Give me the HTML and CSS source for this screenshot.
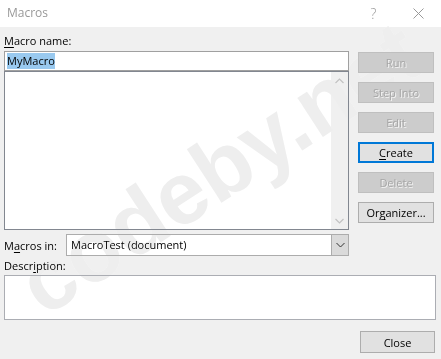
FILE: index.html
```html
<!DOCTYPE html>
<html lang="en">
<head>
    <meta charset="UTF-8">
    <meta name="viewport" content="width=device-width, initial-scale=1">
    <title>Macros</title>
    <link rel="stylesheet" href="styles.css">
</head>
<body>
<div class="dialog">
    <div class="watermark wm-under" aria-hidden="true">codeby.net</div>

    <div class="titlebar">
        <span class="title">Macros</span>
        <span class="caption-btn help">?</span>
        <span class="caption-btn">
            <svg width="11" height="11" viewBox="0 0 11 11"><path d="M0.5 0.5 L10.5 10.5 M10.5 0.5 L0.5 10.5" stroke="#999" stroke-width="1" fill="none"/></svg>
        </span>
    </div>

    <div class="content">
        <div class="top">
            <div class="left">
                <div class="lbl"><u>M</u>acro name:</div>
                <div class="name-input"><span class="sel">MyMacro</span></div>
                <div class="listbox">
                    <div class="list-items"></div>
                    <div class="vscroll">
                        <svg width="9" height="6" viewBox="0 0 9 6"><path d="M0.5 5 L4.5 1 L8.5 5" stroke="#c2c2c2" stroke-width="1.2" fill="none"/></svg>
                        <svg width="9" height="6" viewBox="0 0 9 6"><path d="M0.5 1 L4.5 5 L8.5 1" stroke="#c2c2c2" stroke-width="1.2" fill="none"/></svg>
                    </div>
                </div>
            </div>
            <div class="actions">
                <button class="btn disabled">Run</button>
                <button class="btn disabled">Step Into</button>
                <button class="btn disabled">Edit</button>
                <button class="btn default"><u>C</u>reate</button>
                <button class="btn disabled">Delete</button>
                <button class="btn">Or<u>g</u>anizer...</button>
            </div>
        </div>

        <div class="macros-in">
            <div class="lbl in-lbl">M<u>a</u>cros in:</div>
            <div class="combo">
                <span class="combo-text">MacroTest (document)</span>
                <span class="combo-btn">
                    <svg width="9" height="6" viewBox="0 0 9 6"><path d="M0.5 1 L4.5 5 L8.5 1" stroke="#333" stroke-width="1" fill="none"/></svg>
                </span>
            </div>
        </div>

        <div class="lbl desc-lbl">Descr<u>i</u>ption:</div>
        <div class="desc-box"></div>

        <div class="footer">
            <button class="btn close-btn">Close</button>
        </div>
    </div>

    <div class="watermark wm-over">codeby.net</div>
</div>
</body>
</html>
```

FILE: styles.css
```css
body { margin: 0; background: #f0f0f0; font-family: "Open Sans", "Noto Sans", sans-serif; font-size: 11px; color: #000; }
.dialog { position: relative; width: 441px; height: 359px; overflow: hidden; background: #f0f0f0; }

.titlebar { position: relative; z-index: 1; display: flex; height: 27px; background: #fff; }
.title { flex: 1; padding: 5px 0 0 7px; font-size: 12px; line-height: 15px; color: #999; }
.caption-btn { width: 45px; display: flex; align-items: center; justify-content: center; color: #999; }
.help { font-size: 14px; font-weight: 300; padding-bottom: 1px; }

.content { position: relative; z-index: 1; padding: 6px 5px 0 4px; }
.lbl { line-height: 15px; }
.lbl u, .btn u { text-decoration-thickness: 1px; text-underline-offset: 2px; }

.top { display: flex; }
.left { width: 345px; }
.name-input { margin-top: 3px; height: 20px; box-sizing: border-box; border: 1px solid #a0a0a0; background: #fff; padding: 1px 0 0 2px; line-height: 16px; }
.sel { background: #99c9ef; display: inline-block; }
.listbox { height: 159px; box-sizing: border-box; border: 1px solid #828790; background: #fff; display: flex; }
.list-items { flex: 1; }
.vscroll { width: 17px; background: #f0f0f0; display: flex; flex-direction: column; justify-content: space-between; align-items: center; padding: 6px 0 5px; }

.actions { margin-left: 9px; width: 76px; padding-top: 19px; display: flex; flex-direction: column; gap: 9px; }
.btn { height: 21px; box-sizing: border-box; border: 1px solid #adadad; background: #e1e1e1; font: inherit; color: #000; padding: 0; line-height: 17px; }
.btn.disabled { background: #cccccc; border-color: #bfbfbf; color: #a6a6a6; text-shadow: 1px 1px 0 #f4f4f4; }
.btn.default { border: 2px solid #0078d7; line-height: 15px; }

.macros-in { display: flex; align-items: center; margin-top: 4px; height: 22px; }
.in-lbl { width: 62px; }
.combo { width: 283px; height: 22px; box-sizing: border-box; border: 1px solid #acacac; background: #fff; display: flex; }
.combo-text { flex: 1; padding-left: 4px; line-height: 19px; }
.combo-btn { width: 16px; background: #dadada; border-left: 1px solid #acacac; display: flex; align-items: center; justify-content: center; }

.desc-lbl { margin-top: 2px; }
.desc-box { margin-top: 2px; height: 45px; box-sizing: border-box; border: 1px solid #abadb3; background: #fff; }

.footer { display: flex; justify-content: flex-end; margin-top: 11px; padding-right: 1px; }
.close-btn { width: 75px; height: 22px; }

/* watermark: a light copy under the controls for the grey face, a darkening copy over the white boxes */
.watermark { position: absolute; left: 220px; top: 168px; transform: translate(-50%, -50%) rotate(-33deg); font-family: "Liberation Sans", sans-serif; font-weight: bold; font-size: 88px; line-height: 1; white-space: nowrap; pointer-events: none; }
.wm-under { z-index: 0; color: #f8f8f8; }
.wm-over { z-index: 2; color: #eeeeee; mix-blend-mode: darken; }
```
